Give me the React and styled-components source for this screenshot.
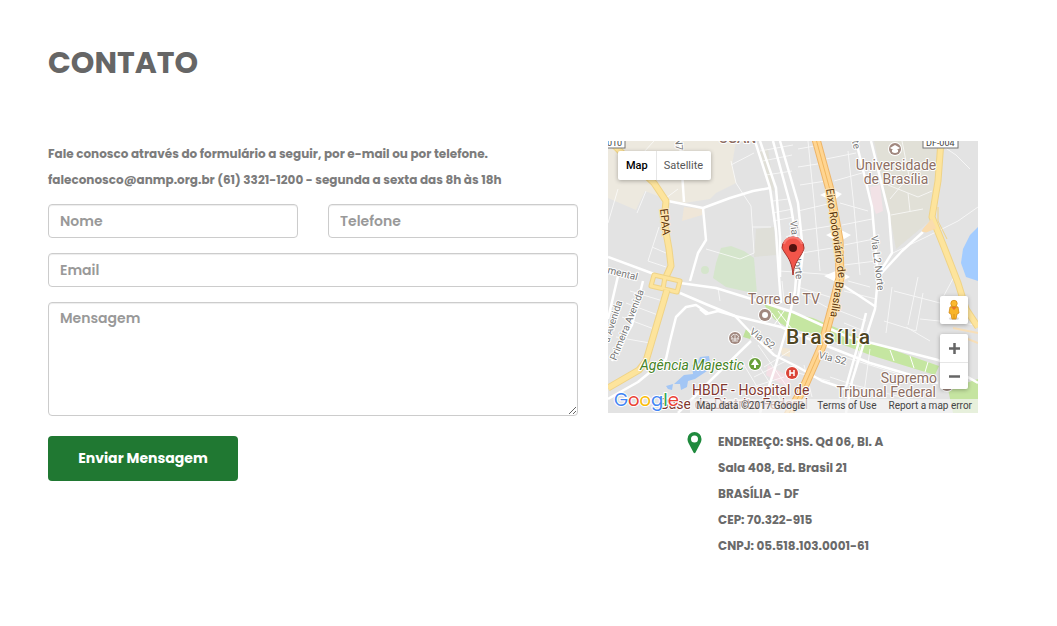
import React from "react";
import styled, { createGlobalStyle } from "styled-components";

const GlobalStyle = createGlobalStyle`
  *, *::before, *::after { box-sizing: border-box; }
  body {
    margin: 0;
    background: #fff;
    color: #666;
    font-family: Poppins, Inter, "Open Sans", sans-serif;
    font-weight: 600;
  }
  button, input, textarea { font: inherit; }
`;

const Page = styled.main`
  max-width: 1026px;
  padding: 40px 48px;
`;

const Title = styled.h1`
  margin: 0 0 56px;
  font-size: 30px;
  line-height: 45px;
  font-weight: 700;
  color: #666;
`;

const Columns = styled.div`
  display: grid;
  grid-template-columns: 53fr 37fr;
  gap: 30px;
  align-items: start;
`;

const Intro = styled.p`
  margin: 0 0 11px;
  font-size: 12px;
  font-weight: 700;
  line-height: 26px;
  color: #7c7c7c;
`;

const Form = styled.form`
  display: flex;
  flex-direction: column;
  gap: 15px;
`;

const FieldRow = styled.div`
  display: grid;
  grid-template-columns: 1fr 1fr;
  gap: 30px;
`;

const Input = styled.input`
  display: block;
  width: 100%;
  height: 34px;
  padding: 6px 11px;
  border: 1px solid #ccc;
  border-radius: 4px;
  background: #fff;
  box-shadow: inset 0 1px 1px rgba(0, 0, 0, 0.075);
  color: #555;
  font-size: 14px;
  line-height: 20px;
  &::placeholder { color: #999; opacity: 1; }
`;

const TextArea = styled(Input)`
  height: 114px;
  padding-top: 5px;
  resize: vertical;
`;

const Submit = styled.button`
  align-self: flex-start;
  width: 190px;
  height: 45px;
  margin-top: 5px;
  padding: 0;
  border: 0;
  border-radius: 4px;
  background: #207832;
  color: #fff;
  font-size: 14px;
  font-weight: 700;
  cursor: pointer;
`;

const Aside = styled.div``;

const MapFrame = styled.div`
  position: relative;
  overflow: hidden;
  background: #e3e3e3;
  font-family: Roboto, sans-serif;
  font-weight: 400;
`;

const MapDrawing = styled.svg`
  display: block;
  width: 100%;
  height: 272px;
`;

const MapTypes = styled.div`
  position: absolute;
  top: 10px;
  left: 10px;
  display: flex;
  border-radius: 2px;
  background: #fff;
  box-shadow: 0 1px 4px rgba(0, 0, 0, 0.3);
`;

const MapType = styled.button`
  height: 29px;
  padding: 0 8px;
  border: 0;
  background: none;
  box-shadow: ${(p) => (p.$active ? "none" : "inset 1px 0 #e6e6e6")};
  color: ${(p) => (p.$active ? "#000" : "#565656")};
  font-size: 11px;
  font-weight: ${(p) => (p.$active ? 500 : 400)};
`;

const Controls = styled.div`
  position: absolute;
  right: 10px;
  bottom: 24px;
  display: flex;
  flex-direction: column;
  gap: 10px;
`;

const ControlGroup = styled.div`
  width: 28px;
  border-radius: 2px;
  background: #fff;
  box-shadow: 0 1px 4px rgba(0, 0, 0, 0.3);
`;

const Control = styled.button`
  display: flex;
  align-items: center;
  justify-content: center;
  width: 100%;
  height: 28px;
  padding: 0;
  border: 0;
  background: none;
  & + & { border-top: 1px solid #e6e6e6; height: 27px; }
`;

const Credits = styled.div`
  position: absolute;
  right: 0;
  bottom: 0;
  display: flex;
  gap: 12px;
  height: 14px;
  padding: 0 6px;
  background: rgba(245, 245, 245, 0.7);
  color: #444;
  font-size: 10px;
  line-height: 14px;
  white-space: nowrap;
  a { color: #444; text-decoration: none; }
`;

const Contact = styled.div`
  display: flex;
  gap: 16px;
  padding: 16px 0 0 79px;
`;

const Pin = styled.svg`
  flex: none;
  margin-top: 3px;
`;

const Address = styled.address`
  font-style: normal;
  font-size: 12px;
  font-weight: 700;
  line-height: 26px;
  color: #6a6a6a;
`;

const minorRoads = [
  "M46 0 L24 24", "M10 48 L0 82", "M38 50 L29 72", "M70 48 L58 57",
  "M51 86 L40 120 L58 126", "M44 106 L58 112",
  "M123 20 L128 42 L137 56 L143 65 L146 112 L132 118 L98 108",
  "M123 24 L146 12", "M155 20 L184 14", "M158 34 L184 30", "M152 10 L185 4",
  "M144 86 L163 86", "M164 72 L185 68", "M165 80 L186 76", "M165 60 L180 58",
  "M178 96 L188 92", "M172 130 L228 134", "M190 8 L212 4", "M190 26 L216 22",
  "M192 44 L218 40", "M190 70 L224 62", "M192 90 L228 84", "M194 112 L230 106",
  "M200 0 L206 60", "M206 60 L212 130", "M218 18 L248 12", "M226 40 L254 32",
  "M232 62 L260 70", "M234 84 L264 78", "M236 104 L266 98", "M236 124 L268 120",
  "M240 10 L246 66 L252 134", "M282 58 L297 40 L310 28", "M283 74 L315 68",
  "M280 44 L310 56 L324 50", "M294 0 L302 40", "M302 70 L300 52",
  "M285 112 L318 96 L350 80 L370 66", "M327 0 L348 14 L362 28",
  "M286 150 L332 162 L348 132", "M276 180 L308 190 L315 152",
  "M298 186 L322 200", "M284 146 L278 192", "M310 136 L300 184",
  "M312 178 L370 184", "M22 150 L55 160", "M18 162 L50 174", "M14 176 L46 188",
  "M8 196 L42 202", "M58 150 L54 170", "M110 147 L112 160",
  "M150 204 L182 250", "M144 214 L172 258", "M136 224 L160 264",
  "M156 226 L182 210", "M146 236 L178 220", "M138 248 L176 236",
  "M196 224 L204 256", "M190 232 L222 240", "M236 216 L300 236",
  "M252 206 L244 240", "M262 208 L256 252", "M222 236 L246 244 L340 268",
  "M174 140 L176 160", "M190 146 L228 158", "M196 154 L226 170", "M236 150 L268 158",
  "M240 140 L262 146", "M232 170 L258 180", "M236 182 L256 190",
];

const mainRoads = [
  "M60 60 L95 67 L122 57 L145 50 L162 47",
  "M95 67 L98 99 L90 112 L82 140",
  "M72 0 L76 61",
  "M0 116 L46 133",
  "M147 0 L162 47 L168 90 L171 136 L173 162",
  "M152 0 L168 47 L172 96 L172 136",
  "M165 0 L183 66 L190 110 L187 150 L178 190 L166 230 L152 272",
  "M172 0 L190 62 L195 110 L190 156",
  "M72 142 L108 147 L150 160 L185 171 L240 196 L330 219 L370 242",
  "M72 152 L100 164 L127 175 L173 186 L196 196 L262 222 L330 242",
  "M100 172 L88 164 L78 166 L68 176 L62 200 L58 218 L30 241 L0 258",
  "M92 168 L98 173 L110 170 L127 175 L144 193 L166 214 L190 226 L214 240 L262 256",
  "M143 200 L104 238 L70 272",
  "M10 135 L0 178",
  "M35 140 L24 184 L4 220",
  "M228 140 L250 154 L268 166",
  "M248 0 L264 66 L270 136 L267 168 L255 205 L244 240 L238 272",
  "M263 0 L281 73 L284 112 L270 134",
  "M258 172 L250 204 L238 246",
  "M270 136 L294 110 L315 91",
];

function Road({ d, width, color, edge }) {
  return (
    <g fill="none" strokeLinejoin="round">
      <path d={d} stroke={edge} strokeWidth={width + 1} />
      <path d={d} stroke={color} strokeWidth={width - 1} />
    </g>
  );
}

function Poi({ x, y, color = "#a1887f", children }) {
  return (
    <g transform={`translate(${x} ${y})`}>
      <circle r="7" fill="#fff" />
      <circle r="6" fill={color} />
      {children}
    </g>
  );
}

function CityMap() {
  return (
    <MapDrawing viewBox="0 0 370 272" preserveAspectRatio="xMidYMid slice" role="img" aria-label="Mapa de Brasília">
      <rect x="-400" width="1200" height="272" fill="#e3e3e3" />
      <path d="M0 0H128L124 24L128 42L108 52L102 58L76 62L60 59L37 50L28 69L0 57Z" fill="#ede9df" />
      <path d="M76 66L94 68V74L74 80Z" fill="#efe6d8" />
      <path d="M266 0H330L324 78L288 108L280 66Z" fill="#e1e0d7" />
      <path d="M150 10L160 8L166 50L162 48Z" fill="#e0dfd7" />
      <path d="M148 88L166 86L168 114L146 116Z" fill="#dfdfd8" />
      <path d="M262 46L272 44L275 70L268 73L264 62Z" fill="#f2e2e6" />
      <path d="M113 107L123 105L136 110L146 117L149 153L118 146L105 137L108 122Z" fill="#d5e5cc" />
      <circle cx="97" cy="129" r="4" fill="#d5e5cc" />
      <path d="M160 224L182 236V248L158 234Z" fill="#f3dfe5" />
      <path d="M172 206L182 208V216L174 214Z" fill="#f2e7d3" />
      <path d="M370 86L362 94L355 108L353 122L358 136L370 140Z" fill="#a3ccff" />
      <path d="M66 243L76 234L85 233L84 224L90 221L92 216L101 215L102 221L93 226L99 230L87 238L80 240L79 246L73 249L72 243Z" fill="#a3c6f5" />
      <path d="M58 245L65 243L64 249L60 248Z" fill="#a3c6f5" />
      <path d="M340 248L352 244L370 238V272H345Z" fill="#c5e4a0" />
      <path d="M155 162L175 170L205 177L257 199L331 225L327 234L262 214L210 194L180 187L166 178Z" fill="#c5e6a1" />
      <path d="M138 188L144 193L142 198L135 196Z" fill="#bfe19b" />
      <g fill="none" stroke="#fff" strokeWidth="1" opacity="0.7">
        {minorRoads.map((d) => <path key={d} d={d} />)}
      </g>
      <g fill="none" stroke="#fff" strokeWidth="2.500" strokeLinejoin="round">
        {mainRoads.map((d) => <path key={d} d={d} />)}
      </g>
      <g fill="#fff">
        <path d="M212 54L224 48L234 53L225 60Z" />
        <path d="M218 94L231 88L243 94L231 101Z" />
        <path d="M216 135L230 129L242 136L230 142Z" />
      </g>
      <g stroke="#fff" strokeWidth="1">
        <path d="M164 172L174 186M170 170L184 188M176 170L166 184M282 209L286 220M302 215L306 227M320 221L317 231" />
      </g>
      <Road d="M2 0L22 20L46 42L58 60L56 80L61 108L63 125L58 136" width={6} color="#fde49c" edge="#efd387" />
      <Road d="M46 134L72 140L69 151L43 145Z M57 136L55 148" width={4} color="#fde49c" edge="#efd387" />
      <Road d="M59 149L38 220L31 229L0 247" width={6} color="#fde49c" edge="#efd387" />
      <Road d="M333 0L330 40L324 76L336 106L350 142L358 168L370 186" width={6} color="#fde49c" edge="#efd387" />
      <path d="M330 66L330 80L339 98" fill="none" stroke="#efd387" strokeWidth="1" />
      <path d="M324 78L317 86L314 90L318 91L328 87" fill="#fadcae" stroke="#fadcae" strokeWidth="1" />
      <path d="M345 187L370 192M355 196L370 202" fill="none" stroke="#f8dfb8" strokeWidth="2" />
      <Road d="M208 -2L222 49L231 99L232 137L225 164L214 205L196 246L180 274" width={8} color="#ffd591" edge="#eeb568" />
      <path d="M208 -2L222 49L231 99L232 137L225 164L214 205L196 246L180 274" fill="none" stroke="#f1b75f" strokeWidth="1" />

      <g fontSize="10" fill="#777" stroke="#fff" strokeWidth="2" paintOrder="stroke" strokeLinejoin="round">
        <text transform="translate(-1 132) rotate(14)">mental</text>
        <text transform="translate(1 202) rotate(-72)">a Avenida</text>
        <text transform="translate(8 220) rotate(-68)">Primeira Avenida</text>
        <text transform="translate(67 -3) rotate(85)">N7</text>
        <text transform="translate(182 80) rotate(84)">Via W5 Norte</text>
        <text transform="translate(263 95) rotate(83)">Via L2 Norte</text>
        <text transform="translate(244 0) rotate(78)">te</text>
        <text transform="translate(141 192) rotate(36)">Via S2</text>
        <text transform="translate(210 217) rotate(14)">Via S2</text>
      </g>
      <g fontSize="11" fill="#60370b" stroke="#ffe6b5" strokeWidth="2" paintOrder="stroke">
        <text transform="translate(52 68) rotate(84)">EPAA</text>
        <text transform="translate(218 48) rotate(82)">Eixo Rodoviário de</text>
        <text transform="translate(228 140) rotate(99)">Brasília</text>
      </g>

      <g fontSize="14" fill="#8d6e63" stroke="#fff" strokeWidth="2" paintOrder="stroke" strokeLinejoin="round">
        <text x="111" y="2" fontWeight="500">SGAN</text>
        <text x="288" y="29" textAnchor="middle">Universidade</text>
        <text x="288" y="43" textAnchor="middle">de Brasília</text>
        <text x="140" y="163">Torre de TV</text>
        <text x="329" y="242" textAnchor="end">Supremo</text>
        <text x="328" y="256" textAnchor="end">Tribunal Federal</text>
        <text x="84" y="254" fill="#82382f">HBDF - Hospital de</text>
        <text x="52" y="268" fill="#82382f">Base do Distrito Federal</text>
        <text x="32" y="229" fill="#468325" fontStyle="italic">Agência Majestic</text>
      </g>
      <text x="178" y="203" fontSize="21" fontWeight="500" letterSpacing="2" fill="#4e4522" stroke="#fff" strokeWidth="2" paintOrder="stroke">Brasília</text>

      <Poi x={287} y={8}>
        <path d="M-5 -1L0 -4L5 -1L0 2Z" fill="#fff" />
        <path d="M-3 1V3Q0 5 3 3V1" fill="#fff" />
      </Poi>
      <Poi x={157} y={174}><circle r="3" fill="#fff" /></Poi>
      <Poi x={127} y={197}>
        <path d="M-4 -1Q-2 -5 0 -3Q2 -5 4 -1M-3 1V-1M0 3V-2M3 1V-1M-3 3H3M-4 1H4" fill="none" stroke="#fff" strokeWidth="0.800" />
      </Poi>
      <Poi x={147} y={223} color="#689f38">
        <path d="M0 -5L4 1H1V4H-1V1H-4Z" fill="#fff" />
      </Poi>
      <Poi x={184} y={232} color="#db4437">
        <path d="M-2 -3V3M2 -3V3M-2 0H2" stroke="#fff" strokeWidth="1.500" />
      </Poi>
      <Poi x={339} y={244} />

      <g fontSize="9" fill="#444">
        <rect x="-5" y="-5" width="22" height="12" fill="#fff" stroke="#777" />
        <text x="-1" y="5">010</text>
        <rect x="315" y="-5" width="35" height="12" fill="#fff" stroke="#777" />
        <text x="318" y="5">DF-004</text>
      </g>

      <g transform="translate(185 96)">
        <path d="M0 38C-1 26 -4 22 -8 16C-10 13 -11 11 -11 11A11 11 0 1 1 11 11C11 13 9 16 8 18C4 24 1 28 0 38Z" fill="#f2554a" stroke="#a8312b" strokeWidth="1" />
        <path d="M-9 7A9.500 9.500 0 0 1 9 7" fill="none" stroke="#f77b72" strokeWidth="2" />
        <circle cy="11" r="4" fill="#54120f" />
      </g>
      <text x="6" y="265" fontFamily="Poppins, Lato, sans-serif" fontSize="18" stroke="#fff" strokeWidth="2" paintOrder="stroke">
        <tspan fill="#4285f4">G</tspan><tspan fill="#ea4335">o</tspan><tspan fill="#fbbc05">o</tspan><tspan fill="#4285f4">g</tspan><tspan fill="#34a853">l</tspan><tspan fill="#ea4335">e</tspan>
      </text>
    </MapDrawing>
  );
}

function Pegman() {
  return (
    <svg width="14" height="22" viewBox="0 0 14 22">
      <ellipse cx="7" cy="19.500" rx="5" ry="1.500" fill="#ddd" />
      <path d="M3 8Q7 6 11 8L12 14L10 15L9 20H5L4 15L2 14Z" fill="#f9b529" stroke="#d48a13" strokeWidth="0.800" />
      <path d="M4 8L7 11L10 8Z" fill="#e9772b" />
      <circle cx="7" cy="4.500" r="3.200" fill="#fbb92f" stroke="#d48a13" strokeWidth="0.800" />
      <path d="M7 15V20" stroke="#d48a13" strokeWidth="0.800" />
    </svg>
  );
}

export default function App() {
  return (
    <>
      <GlobalStyle />
      <Page>
        <Title>CONTATO</Title>
        <Columns>
          <section>
            <Intro>
              Fale conosco através do formulário a seguir, por e-mail ou por telefone.
              <br />
              faleconosco@anmp.org.br (61) 3321-1200 - segunda a sexta das 8h às 18h
            </Intro>
            <Form onSubmit={(e) => e.preventDefault()}>
              <FieldRow>
                <Input name="nome" placeholder="Nome" aria-label="Nome" />
                <Input name="telefone" type="tel" placeholder="Telefone" aria-label="Telefone" />
              </FieldRow>
              <Input name="email" type="email" placeholder="Email" aria-label="Email" />
              <TextArea as="textarea" name="mensagem" placeholder="Mensagem" aria-label="Mensagem" />
              <Submit type="submit">Enviar Mensagem</Submit>
            </Form>
          </section>
          <Aside>
            <MapFrame>
              <CityMap />
              <MapTypes>
                <MapType type="button" $active>Map</MapType>
                <MapType type="button">Satellite</MapType>
              </MapTypes>
              <Controls>
                <ControlGroup>
                  <Control type="button" aria-label="Street View"><Pegman /></Control>
                </ControlGroup>
                <ControlGroup>
                  <Control type="button" aria-label="Zoom in">
                    <svg width="11" height="11"><path d="M5.500 0V11M0 5.500H11" stroke="#666" strokeWidth="2.500" /></svg>
                  </Control>
                  <Control type="button" aria-label="Zoom out">
                    <svg width="11" height="11"><path d="M0 5.500H11" stroke="#666" strokeWidth="2.500" /></svg>
                  </Control>
                </ControlGroup>
              </Controls>
              <Credits>
                <span>Map data ©2017 Google</span>
                <a href="#terms">Terms of Use</a>
                <a href="#report">Report a map error</a>
              </Credits>
            </MapFrame>
            <Contact>
              <Pin width="15" height="22" viewBox="0 0 15 22" aria-hidden="true">
                <path fillRule="evenodd" d="M7.500 0A7 7 0 0 0 .5 7C.5 9 1 10 2 12L6.500 20.500Q7.500 22 8.500 20.500L13 12C14 10 14.500 9 14.500 7A7 7 0 0 0 7.500 0ZM7.500 3.500A3.500 3.500 0 1 1 7.500 10.500A3.500 3.500 0 0 1 7.500 3.500Z" fill="#1f8a3d" />
              </Pin>
              <Address>
                ENDEREÇ0: SHS. Qd 06, Bl. A<br />
                Sala 408, Ed. Brasil 21<br />
                BRASÍLIA - DF<br />
                CEP: 70.322-915<br />
                CNPJ: 05.518.103.0001-61
              </Address>
            </Contact>
          </Aside>
        </Columns>
      </Page>
    </>
  );
}
